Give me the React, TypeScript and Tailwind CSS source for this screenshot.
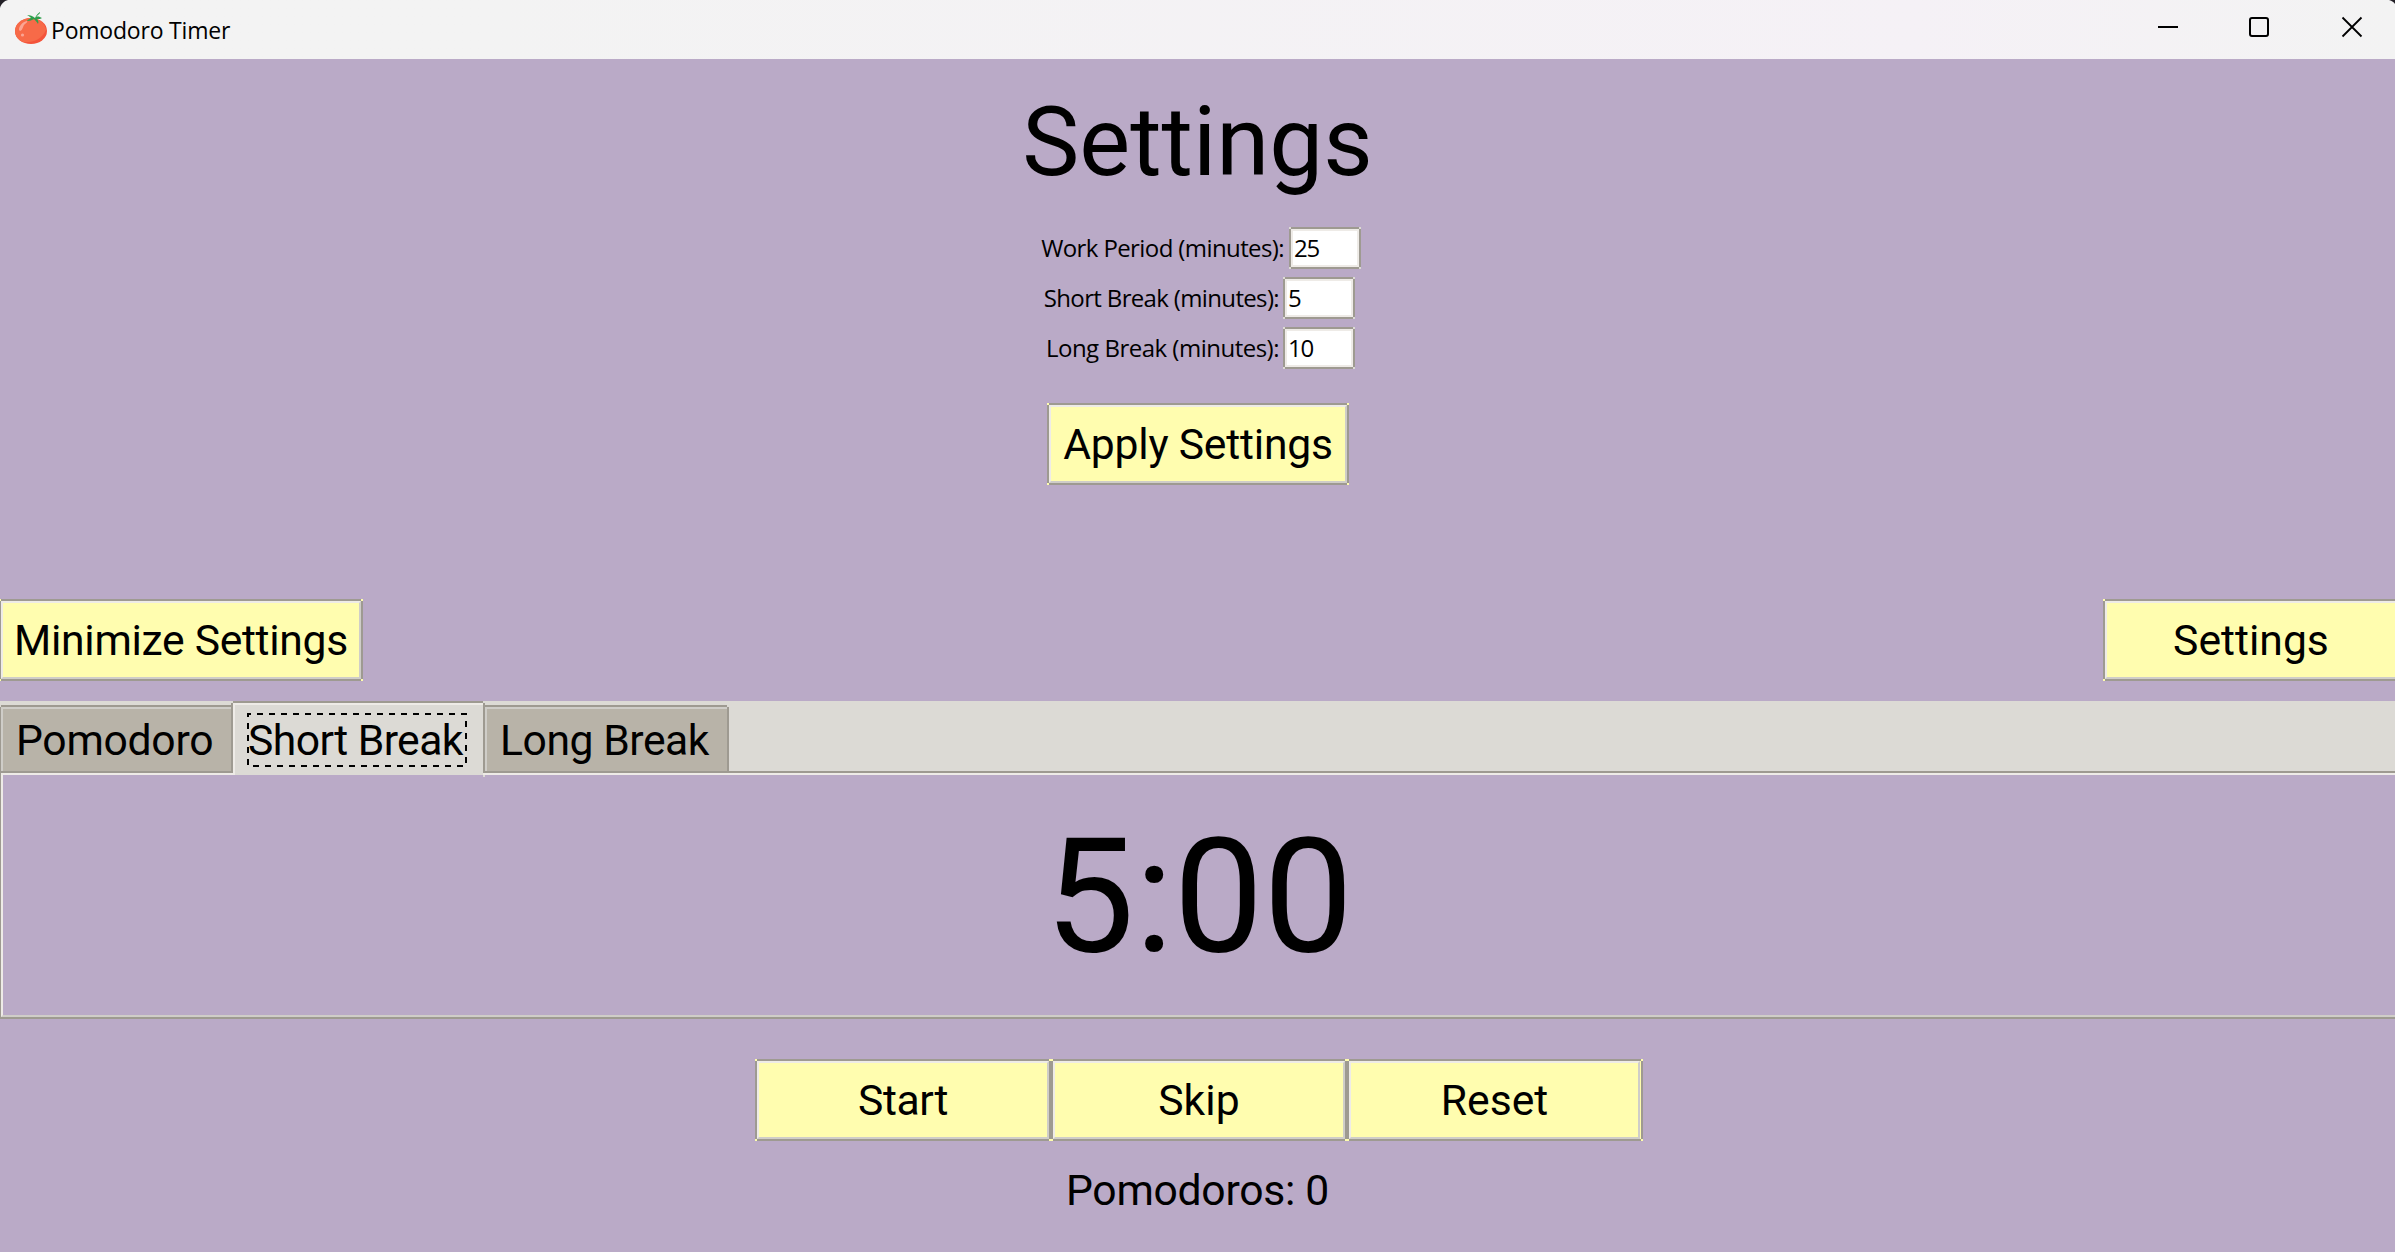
import React from "react";

function Corners() {
  return (
    <>
      <span className="absolute -left-0.5 -top-0.5 size-0.5 bg-[#fffdaf]" />
      <span className="absolute -right-0.5 -top-0.5 size-0.5 bg-[#fffdaf]" />
      <span className="absolute -bottom-0.5 -left-0.5 size-0.5 bg-[#fffdaf]" />
      <span className="absolute -bottom-0.5 -right-0.5 size-0.5 bg-[#fffdaf]" />
    </>
  );
}

function Button({ label, className = "" }: { label: string; className?: string }) {
  return (
    <button
      className={`relative h-[82px] shrink-0 border-2 border-[#9e9a91] bg-[#fffdaf] ${className}`}
    >
      <Corners />
      <span className="flex h-full items-center justify-center border-2 border-b-[#cfcdc8] border-l-[#eeebe7] border-r-[#cfcdc8] border-t-[#eeebe7]">
        <span className="whitespace-nowrap text-[42.67px] leading-[50px]">{label}</span>
      </span>
    </button>
  );
}

function FieldCorners() {
  return (
    <>
      <span className="absolute -left-0.5 -top-0.5 size-0.5 bg-[#dcdad5]" />
      <span className="absolute -right-0.5 -top-0.5 size-0.5 bg-[#dcdad5]" />
      <span className="absolute -bottom-0.5 -left-0.5 size-0.5 bg-[#dcdad5]" />
      <span className="absolute -bottom-0.5 -right-0.5 size-0.5 bg-[#dcdad5]" />
    </>
  );
}

function Field({ label, value, className }: { label: string; value: string; className: string }) {
  return (
    <div className="flex h-[42px] items-center font-['Open_Sans','Noto_Sans',sans-serif] text-[24px] leading-8">
      <label className={`whitespace-nowrap text-right ${className}`}>{label}</label>
      <div className="relative ml-1 h-[42px] w-[72px] border-2 border-[#9e9a91] bg-white">
        <FieldCorners />
        <span className="flex h-full items-center border-2 border-[#eeebe7] pl-px tracking-[-1.2px]">
          {value}
        </span>
      </div>
    </div>
  );
}

function Tomato() {
  return (
    <svg className="ml-[15px] mt-[11px] h-[34px] w-[33px] shrink-0 self-start" viewBox="0 0 33 34">
      <ellipse cx="16" cy="20" rx="16" ry="13" fill="#f4533a" />
      <path d="M16 7C7 7 0 13 0 20c0 5 3 9 8 11 8 1 19-2 23-12C30 12 24 7 16 7Z" fill="#f76a48" />
      <path d="M4 19c0-4 3-8 8-9 1 1-1 2-3 4-1 2-2 6-4 6Z" fill="#fba593" />
      <circle cx="7.5" cy="24" r="1.6" fill="#fba593" />
      <path d="M25 1c-3 2-4 4-5 6-2-2-5-3-8-3 2 1 3 2 4 3-1 1-3 1-4 3 3 0 5-1 7-2 1 1 3 3 4 5 1-2 0-4-1-5 2 0 4 0 5-1-2-1-4-2-6-1 1-1 3-3 4-4Z" fill="#2e9f4b" />
    </svg>
  );
}

function TitleBar() {
  return (
    <header className="relative flex h-[59px] shrink-0 items-center bg-linear-to-r from-[#f3f3f3] from-20% via-[#f5f1f6] via-80% to-[#f3f3f3]">
      <Tomato />
      <span className="ml-[3px] whitespace-nowrap font-['Open_Sans','Noto_Sans',sans-serif] text-[23px] leading-8 tracking-[-0.2px]">
        Pomodoro Timer
      </span>
      <svg className="ml-auto h-[59px] w-[280px]" viewBox="0 0 280 59" fill="none" stroke="#000">
        <path d="M43 27h20" strokeWidth="2" />
        <rect x="135" y="18" width="18" height="18" rx="2" strokeWidth="2" />
        <path d="m227.5 17.500 19 19m0-19-19 19" strokeWidth="1.8" />
      </svg>
      <svg className="absolute left-0 top-0 h-2 w-2" viewBox="0 0 8 8">
        <path d="M0 0h8C4 1 1 4 0 8Z" fill="#232027" />
      </svg>
      <svg className="absolute right-0 top-0 h-1 w-1.5" viewBox="0 0 6 4">
        <path d="M0 0h6v4C5 2 3 1 0 0Z" fill="#232027" />
      </svg>
    </header>
  );
}

function Tabs() {
  return (
    <nav className="relative z-10 flex h-[72px] items-end border-b-2 border-[#9e9a91] bg-[#dcdad5] text-[42.67px] leading-[50px]">
      <div className="relative -ml-px h-[66px] w-[232px] border-l-2 border-t-2 border-[#9e9a91]">
        <span className="absolute -left-0.5 -top-0.5 size-0.5 bg-[#dcdad5]" />
        <div className="h-full border-l-2 border-t-2 border-[#cfcdc8] bg-[#b8b3a8] pl-[13px] pt-[6px]">
          <span className="whitespace-nowrap tracking-[-0.28px]">Pomodoro</span>
        </div>
      </div>
      <div className="relative h-[70px] w-[254px] border-x-2 border-t-2 border-[#9e9a91]">
        <span className="absolute -left-0.5 -top-0.5 size-0.5 bg-[#dcdad5]" />
        <span className="absolute -right-0.5 -top-0.5 size-0.5 bg-[#dcdad5]" />
        <div className="h-[72px] border-l-2 border-t-2 border-[#eeebe7] bg-[#dcdad5] pl-[13px] pt-[10px]">
          <span className="whitespace-nowrap tracking-[-0.59px]">Short Break</span>
        </div>
        <span className="absolute -right-0.5 top-[72px] h-0.5 w-0.5 bg-[#dcdad5]" />
        <svg className="absolute left-3.5 top-2.5 h-[54px] w-[220px]" viewBox="0 0 220 54" fill="none">
          <path d="M1 1h218v52H1Z" stroke="#000" strokeWidth="2" strokeDasharray="6 6" strokeDashoffset="3" />
        </svg>
      </div>
      <div className="relative h-[66px] w-[244px] border-r-2 border-t-2 border-[#9e9a91]">
        <span className="absolute -right-0.5 -top-0.5 size-0.5 bg-[#dcdad5]" />
        <div className="h-full border-l-2 border-t-2 border-[#cfcdc8] bg-[#b8b3a8] pl-[13px] pt-[6px]">
          <span className="whitespace-nowrap tracking-[-0.45px]">Long Break</span>
        </div>
      </div>
    </nav>
  );
}

export default function App() {
  return (
    <div className="relative flex h-[1252px] w-[2395px] flex-col overflow-hidden bg-[#baaac7] font-[Roboto,sans-serif] text-black">
      <TitleBar />
      <h1 className="mt-[27px] text-center text-[96px] leading-[112px]">Settings</h1>
      <div className="mt-[29px] flex flex-col gap-2">
        <Field label="Work Period (minutes):" value="25" className="w-[1285px] pr-px tracking-[-0.6px]" />
        <Field label="Short Break (minutes):" value="5" className="w-[1279px] tracking-[-0.65px]" />
        <Field label="Long Break (minutes):" value="10" className="w-[1279px] tracking-[-0.5px]" />
      </div>
      <div className="mt-[34px] flex justify-center pl-px">
        <Button label="Apply Settings" className="w-[302px] tracking-[-0.22px]" />
      </div>
      <div className="-ml-px -mr-1 mt-[114px] flex justify-between">
        <Button label="Minimize Settings" className="w-[364px] tracking-[-0.31px]" />
        <Button label="Settings" className="w-[296px]" />
      </div>
      <main className="mt-5">
        <Tabs />
        <section className="-ml-px h-[246px] border-b-2 border-l-2 border-[#9e9a91]">
          <div className="flex h-full justify-center border-b-2 border-l-2 border-t-2 border-b-[#cfcdc8] border-l-[#eeebe7] border-t-[#eeebe7] text-[160px] leading-[244px]">
            5:00
          </div>
        </section>
      </main>
      <div className="mt-10 flex justify-center pl-[3px]">
        <Button label="Start" className="w-[296px] tracking-[-0.4px]" />
        <Button label="Skip" className="w-[296px] tracking-[0.1px]" />
        <Button label="Reset" className="w-[296px] pr-px" />
      </div>
      <p className="mt-6 text-center text-[42.67px] leading-[50px] tracking-[-0.28px]">Pomodoros: 0</p>
    </div>
  );
}
